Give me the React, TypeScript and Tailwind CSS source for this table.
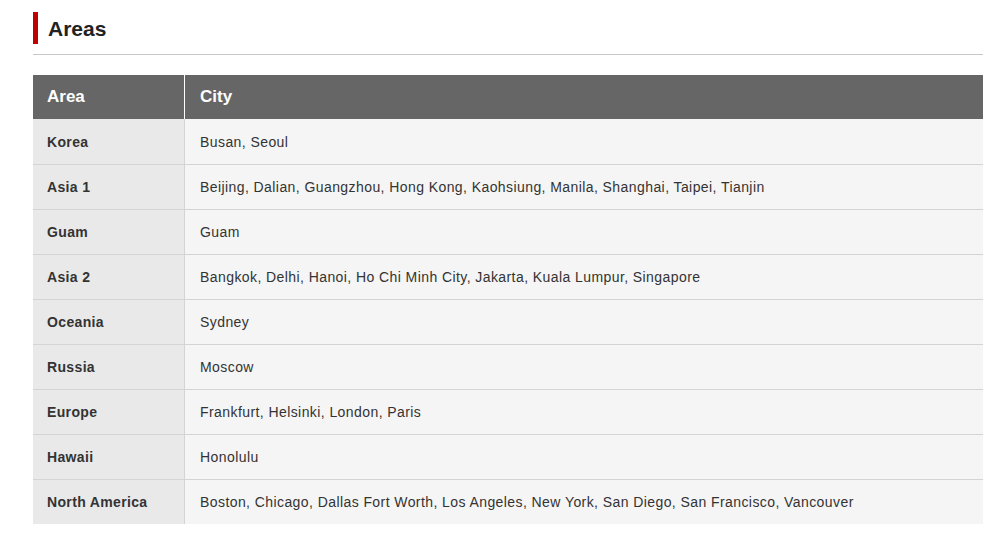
import React from "react";

const rows: [string, string][] = [
  ["Korea", "Busan, Seoul"],
  ["Asia 1", "Beijing, Dalian, Guangzhou, Hong Kong, Kaohsiung, Manila, Shanghai, Taipei, Tianjin"],
  ["Guam", "Guam"],
  ["Asia 2", "Bangkok, Delhi, Hanoi, Ho Chi Minh City, Jakarta, Kuala Lumpur, Singapore"],
  ["Oceania", "Sydney"],
  ["Russia", "Moscow"],
  ["Europe", "Frankfurt, Helsinki, London, Paris"],
  ["Hawaii", "Honolulu"],
  ["North America", "Boston, Chicago, Dallas Fort Worth, Los Angeles, New York, San Diego, San Francisco, Vancouver"],
];

export default function App() {
  return (
    <div className="bg-white w-[998px] h-[542px] pt-[12px] pl-[33px] pr-[15px] text-[#333] font-['Liberation_Sans',Arial,sans-serif]">
      <div className="flex items-center h-[32px] border-l-[5px] border-[#c00000] pl-[10px]">
        <h2 className="text-[21px] font-bold leading-none text-[#222]">Areas</h2>
      </div>
      <div className="mt-[10px] h-px bg-[#c8c8c8]" />
      <div className="mt-[20px]">
        <div className="flex h-[44px] bg-[#666666] text-white text-[17px] font-bold">
          <div className="w-[152px] border-r border-white flex items-center pl-[14px]">Area</div>
          <div className="flex-1 flex items-center pl-[15px]">City</div>
        </div>
        {rows.map(([a, c], i) => (
          <div key={a} className={`flex h-[45px] text-[14px] ${i > 0 ? "border-t border-[#d4d4d4]" : ""}`}>
            <div className="w-[152px] bg-[#e9e9e9] border-r border-[#d4d4d4] flex items-center pl-[14px] pt-px font-bold text-[#333] tracking-[0.35px]">{a}</div>
            <div className="flex-1 bg-[#f5f5f5] flex items-center pl-[15px] pt-px text-[#333] tracking-[0.42px]">{c}</div>
          </div>
        ))}
      </div>
    </div>
  );
}
